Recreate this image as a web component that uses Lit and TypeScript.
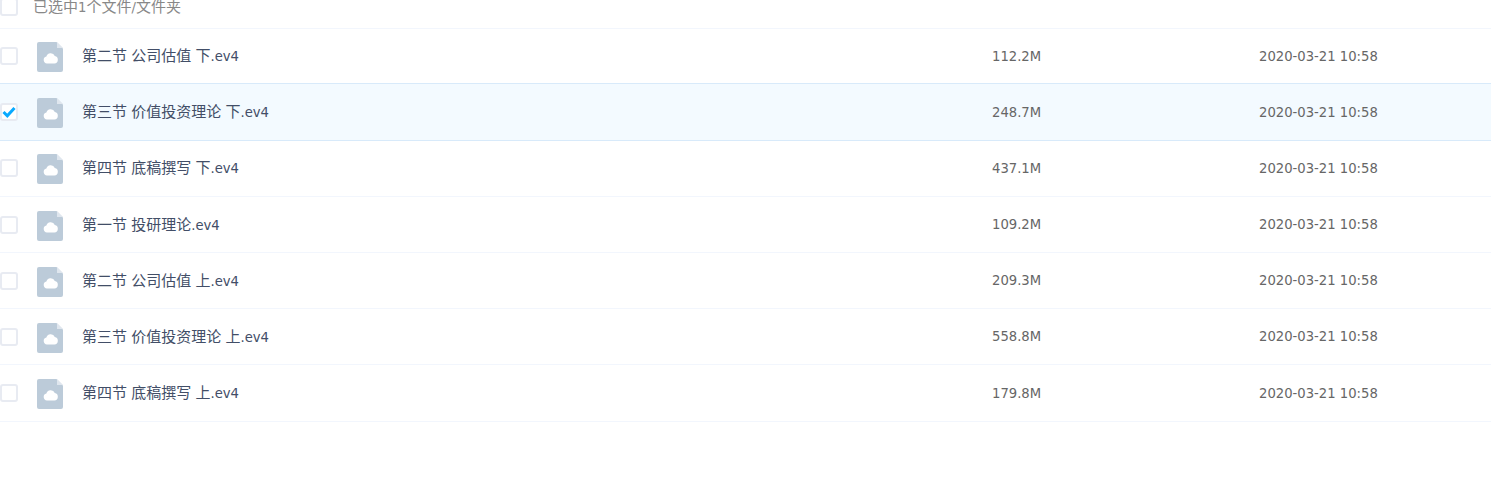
import { LitElement, html, css } from 'lit';
import { customElement } from 'lit/decorators.js';

const files = [
  { name: '第二节 公司估值 下.ev4', size: '112.2M' },
  { name: '第三节 价值投资理论 下.ev4', size: '248.7M', checked: true },
  { name: '第四节 底稿撰写 下.ev4', size: '437.1M' },
  { name: '第一节 投研理论.ev4', size: '109.2M' },
  { name: '第二节 公司估值 上.ev4', size: '209.3M' },
  { name: '第三节 价值投资理论 上.ev4', size: '558.8M' },
  { name: '第四节 底稿撰写 上.ev4', size: '179.8M' },
];

// latin text is set smaller than the han text, the two fonts differ in width
const mixed = (text: string) =>
  text.split(/([\u4e00-\u9fff]+)/).map((part, i) => (i % 2 ? html`<span class="han">${part}</span>` : part));

@customElement('app-root')
export class AppRoot extends LitElement {
  static styles = css`
    :host {
      display: block;
      height: 490px;
      overflow: hidden;
      background: #fff;
      font-family: "DejaVu Sans", "Noto Sans CJK SC", sans-serif;
      font-size: 13.2px;
      color: #424e67;
    }
    .han {
      font-family: "Noto Sans CJK SC", sans-serif;
      font-size: 15px;
    }
    .selected-bar {
      display: flex;
      align-items: flex-end;
      height: 28.5px;
      padding-bottom: 12px;
      box-sizing: border-box;
      border-bottom: 1px solid #f2f6fd;
      color: #888;
      line-height: 24px;
    }
    .selected-bar .label {
      margin-bottom: -4px;
    }
    .selected-bar .box {
      margin-right: 15px;
    }
    .box {
      flex: none;
      width: 18px;
      height: 18px;
      box-sizing: border-box;
      border: 2px solid #e8ebf2;
      border-radius: 3px;
      background: #fff;
      display: flex;
      align-items: center;
      justify-content: center;
    }
    .row {
      display: flex;
      align-items: center;
      height: 56.17px;
      box-sizing: border-box;
      border-bottom: 1px solid #f2f6fd;
    }
    .row.checked {
      height: 57.17px;
      margin-top: -1px;
      padding-top: 1px;
      background: #f3faff;
      border-bottom-color: #d8eafa;
      box-shadow: 0 -1px 0 #d8eafa;
    }
    .file-icon {
      flex: none;
      margin-left: 19px;
      margin-right: 19px;
      margin-top: 2px;
    }
    .name {
      width: 910px;
      flex: none;
      line-height: 24px;
    }
    .size {
      width: 267px;
      flex: none;
      color: #666;
    }
    .time {
      color: #666;
    }
  `;

  renderIcon() {
    return html`<svg class="file-icon" width="26" height="30" viewBox="0 0 26 30">
      <path d="M2 0H19.5L26 6.5V28a2 2 0 0 1-2 2H2a2 2 0 0 1-2-2V2a2 2 0 0 1 2-2z" fill="#bccbd9"></path>
      <path d="M20 0l6 6h-6z" fill="#dfe6ee"></path>
      <path d="M10 21.5a3.5 3.5 0 0 1-.6-6.9 4.4 4.4 0 0 1 8.4-.6 3.8 3.8 0 0 1-.4 7.5z" fill="#fff"></path>
    </svg>`;
  }

  render() {
    return html`
      <div class="selected-bar">
        <span class="box"></span>
        <span class="label">${mixed('已选中1个文件/文件夹')}</span>
      </div>
      ${files.map(
        (f) => html`
          <div class="row ${f.checked ? 'checked' : ''}">
            <span class="box">
              ${f.checked
                ? html`<svg width="14" height="12" viewBox="0 0 14 12">
                    <path d="M1.5 6l3.8 3.8L12.5 2" fill="none" stroke="#09aaff" stroke-width="3"></path>
                  </svg>`
                : ''}
            </span>
            ${this.renderIcon()}
            <span class="name">${mixed(f.name)}</span>
            <span class="size">${f.size}</span>
            <span class="time">2020-03-21 10:58</span>
          </div>
        `
      )}
    `;
  }
}
